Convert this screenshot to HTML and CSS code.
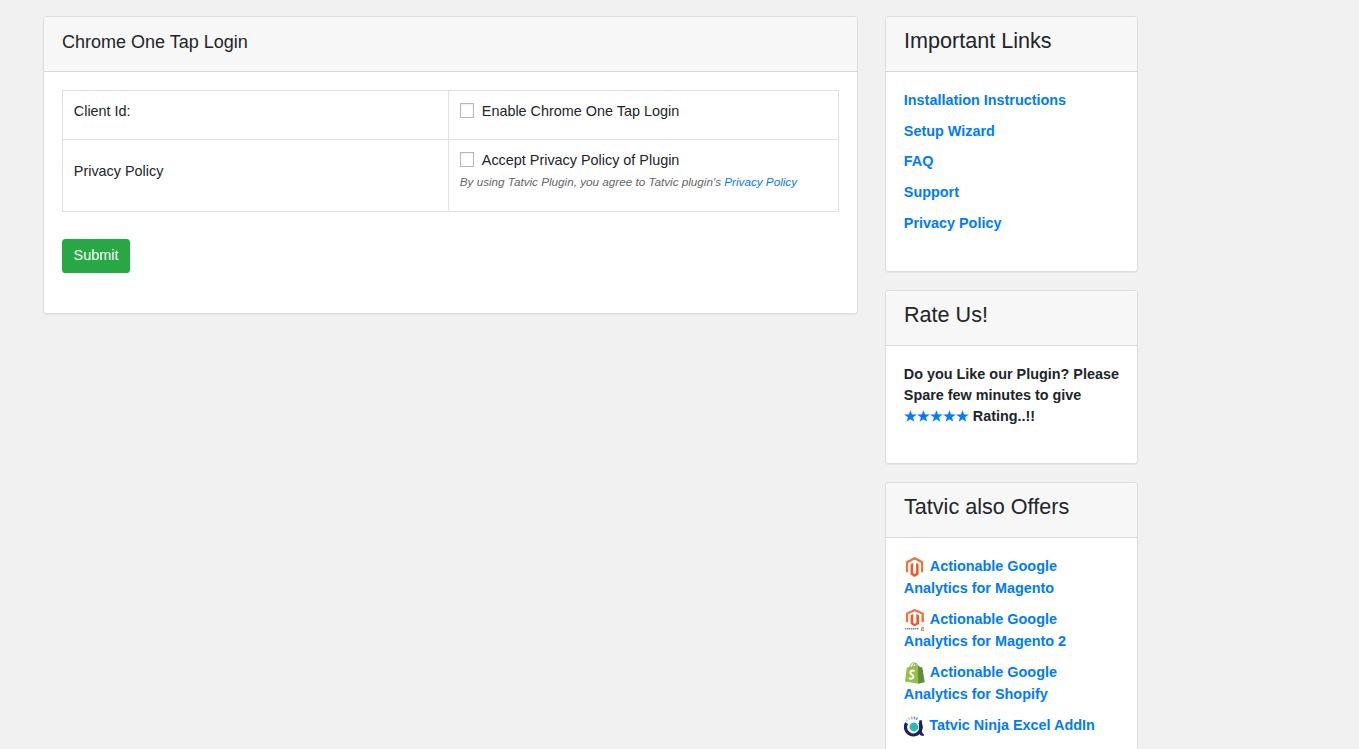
FILE: index.html
```html
<!DOCTYPE html>
<html lang="en">
<head>
<meta charset="utf-8">
<title>Chrome One Tap Login</title>
<link rel="stylesheet" href="styles.css">
</head>
<body>
<svg class="sprite" aria-hidden="true">
  <symbol id="magento" viewBox="0 0 18 20" preserveAspectRatio="none">
    <path d="M1.3 15.2V5.3L9 1.2l7.7 4.1v9.9" fill="none" stroke="#f26f3e" stroke-width="2.3"/>
    <path d="M4.9 7.2l2.6-1.3v10.3l1.5.9 1.5-.9V5.9l2.6 1.3v10.2L9 20l-4.1-2.6z" fill="#ee5a26"/>
  </symbol>
</svg>
<div class="page">
  <main class="card card-main">
    <header class="card-header"><h1 class="title">Chrome One Tap Login</h1></header>
    <form class="card-body">
      <table class="settings">
        <tr class="row-client">
          <td class="label">Client Id:</td>
          <td><label class="check"><input type="checkbox" class="box">Enable Chrome One Tap Login</label></td>
        </tr>
        <tr class="row-privacy">
          <td class="label">Privacy Policy</td>
          <td>
            <label class="check"><input type="checkbox" class="box">Accept Privacy Policy of Plugin</label>
            <p class="note">By using Tatvic Plugin, you agree to Tatvic plugin's <a href="#">Privacy Policy</a></p>
          </td>
        </tr>
      </table>
      <button type="button" class="submit">Submit</button>
    </form>
  </main>
  <aside class="sidebar">
    <section class="card card-links">
      <header class="card-header"><h2 class="side-title">Important Links</h2></header>
      <ul class="links">
        <li><a href="#">Installation Instructions</a></li>
        <li><a href="#">Setup Wizard</a></li>
        <li><a href="#">FAQ</a></li>
        <li><a href="#">Support</a></li>
        <li><a href="#">Privacy Policy</a></li>
      </ul>
    </section>
    <section class="card card-rate">
      <header class="card-header"><h2 class="side-title">Rate Us!</h2></header>
      <p class="rate">Do you Like our Plugin? Please Spare few minutes to give <a href="#" class="stars">★★★★★</a> Rating..!!</p>
    </section>
    <section class="card card-offers">
      <header class="card-header"><h2 class="side-title">Tatvic also Offers</h2></header>
      <ul class="offers">
        <li><a href="#"><svg class="icon" viewBox="0 0 22 22"><use href="#magento" x="1.8" y="1" width="17.6" height="20"/></svg>Actionable Google Analytics for Magento</a></li>
        <li><a href="#"><svg class="icon" viewBox="0 0 22 22"><use href="#magento" x="1.6" y="0" width="18.4" height="17.3"/><path d="M1 19.8h13.6" stroke="#8c8c8c" stroke-width="1.6" stroke-dasharray="1.5 .5"/><path d="M17.3 18.3h2v1.5h-1.9v1.6H20" fill="none" stroke="#ef5b2a" stroke-width=".9"/></svg>Actionable Google Analytics for Magento 2</a></li>
        <li><a href="#"><svg class="icon" viewBox="0 0 22 22"><path d="M2.8 5.8l11-2.7 1 18.7L1 19.4z" fill="#95bf47"/><path d="M14 3.2l2 1.9 2.4.3 2.3 14.8-6.6 1.6z" fill="#5e8e3e"/><path d="M5.8 5.5C6.2 2.4 8.2.6 9.8.8c1.7.2 2 2 2 3.5M8.6 4.8C9 2.5 10.8.9 12 1.3c1 .3 1.3 1.4 1.4 2.4" fill="none" stroke="#80ad3e" stroke-width="1"/><path d="M10.6 9c-1.9-.9-4.4-.2-4.3 1.7.1 1.8 3.2 2.1 3.1 4.2-.1 2-2.7 2.3-4.4.8" fill="none" stroke="#fff" stroke-width="2"/></svg>Actionable Google Analytics for Shopify</a></li>
        <li><a href="#"><svg class="icon icon-ninja" viewBox="0 0 21.5 22"><path d="M2.6 8.2A7.8 7.8 0 1 0 15.6 7.4" fill="none" stroke="#1c2363" stroke-width="3.4"/><path d="M15.3 5.2h2.6v10.6c0 2 .7 3 2.1 3.4v1.6c-2.7.3-4.4-.6-5.2-2.8z" fill="#1c2363"/><circle cx="9.9" cy="12" r="4.4" fill="#27bcb9"/><path d="M1.9 4.6l1.5 1.7M4.3 2.6l1.3 2.2" stroke="#9cd0ea" stroke-width="1.4"/><path d="M7.5 1.5l.5 2.9" stroke="#f5a94c" stroke-width="1.7"/><path d="M10.6 1.5l-.1 2.8M13.3 2.5l-1 2.4" stroke="#49a5df" stroke-width="1.5"/></svg>Tatvic Ninja Excel AddIn</a></li>
      </ul>
    </section>
  </aside>
</div>
</body>
</html>
```
FILE: styles.css
```css
* { box-sizing: border-box; }
body {
  margin: 0;
  background: #f1f1f1;
  color: #212529;
  font: 14.4px/21.6px "Liberation Sans", Arial, sans-serif;
}
h1, h2, p, ul { margin: 0; padding: 0; font-weight: 400; }
ul { list-style: none; }
a { color: #007bff; text-decoration: none; }
.sprite { display: none; }
.page {
  display: flex;
  align-items: flex-start;
  gap: 27px;
  padding: 16px 0 0 43px;
}
.card {
  background: #fff;
  border: 1px solid #dcdddd;
  border-radius: 3.6px;
  box-shadow: 0 1px 1px rgba(0, 0, 0, .04);
}
.card-main { width: 815px; height: 298px; }
.card-header {
  height: 55px;
  padding: 12px 18px;
  background: #f7f7f7;
  border-bottom: 1px solid #d8d8d8;
  border-radius: 2.6px 2.6px 0 0;
}
.title { font-size: 18px; line-height: 27px; }
.card-body { padding: 18px; }
.settings {
  width: 777px;
  border-collapse: collapse;
  table-layout: fixed;
}
.settings td {
  padding: 10px 10.8px 0;
  border: 1px solid #dee2e6;
  vertical-align: top;
}
.settings .label { width: 386px; }
.row-client { height: 49px; }
.row-privacy { height: 72px; }
.settings .row-privacy .label { padding-top: 21px; }
.check { display: flex; align-items: flex-start; }
.box {
  appearance: none;
  width: 14px;
  height: 15px;
  margin: 2px 8px 0 0;
  border: 1px solid #b4b9be;
  background: #fff;
  box-shadow: inset 0 1px 2px rgba(0, 0, 0, .07);
}
.note {
  color: #666;
  font-size: 11.7px;
  font-style: italic;
  line-height: 20px;
}
.submit {
  display: block;
  width: 68px;
  height: 34px;
  margin-top: 27px;
  padding: 0;
  border: 0;
  border-radius: 3.6px;
  background: #28a745;
  color: #fff;
  font: inherit;
}
.sidebar {
  display: flex;
  flex-direction: column;
  gap: 18px;
  width: 253px;
}
.side-title { font-size: 21.6px; line-height: 24px; }
.card-links { height: 256px; }
.card-rate { height: 174px; }
.card-offers {
  height: 267px;
  border-bottom: 0;
  border-radius: 3.6px 3.6px 0 0;
}
.links, .offers, .rate { padding: 18px 17.8px; font-weight: 700; }
.links li { margin-bottom: 9.1px; }
.rate { padding-right: 16px; line-height: 21px; }
.offers { padding-top: 17px; padding-bottom: 0; }
.offers li { line-height: 22px; }
.offers li + li { margin-top: 9px; }
.icon {
  width: 22px;
  height: 22px;
  margin: -3px 4px -3px 0;
  vertical-align: middle;
}
.icon-ninja { width: 21.5px; }
```
